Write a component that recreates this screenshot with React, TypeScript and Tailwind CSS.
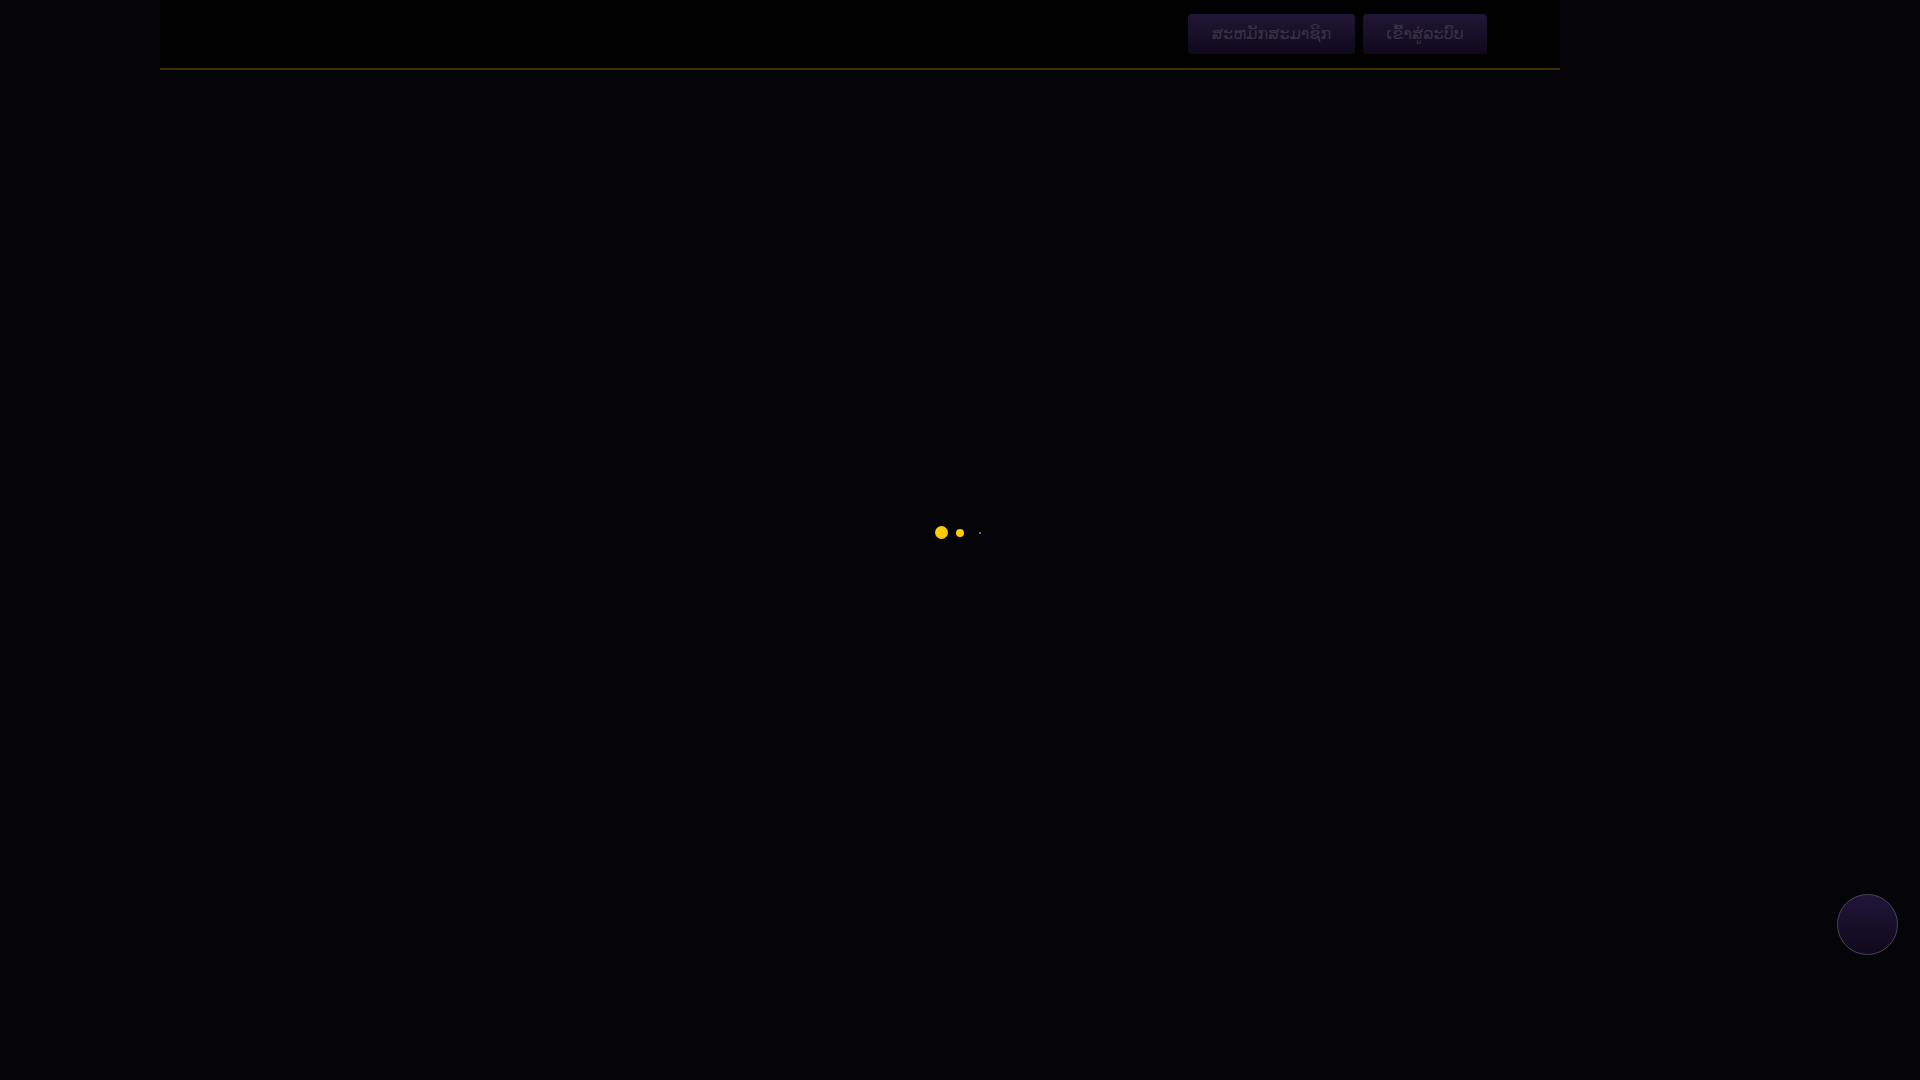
export default function App() {
  return (
    <div
      className="relative min-h-screen w-full bg-[#050409] overflow-hidden"
      style={{ fontFamily: '"DejaVu Sans", "Noto Sans", sans-serif' }}
    >
      <header className="ml-[160px] w-[1400px] h-[70px] bg-[#010102] border-b-2 border-[#3b3103] flex items-center justify-end gap-2 pr-[73px]">
        <button className="h-10 w-[167px] rounded-[4px] bg-gradient-to-b from-[#211636] to-[#10091c] text-[#383344] text-[16px]">
          ສະຫມັກສະມາຊິກ
        </button>
        <button className="h-10 w-[124px] rounded-[4px] bg-gradient-to-b from-[#211636] to-[#10091c] text-[#383344] text-[16px]">
          ເຂົ້າສູ່ລະບົບ
        </button>
      </header>

      {/* loading dots */}
      <main className="h-[924px] flex items-center justify-center">
        <div className="mr-[4px] mt-[1px] flex items-center gap-[7px]">
          <span className="w-[13px] h-[13px] rounded-full bg-[#ffcc00]" />
          <span className="ml-[1px] w-[8px] h-[8px] rounded-full bg-[#ffcc00]" />
          <span className="ml-[8px] w-[2px] h-[2px] rounded-full bg-[#b39200]" />
        </div>
      </main>

      <button className="absolute left-[1837px] top-[894px] w-[61px] h-[61px] rounded-full border border-[#4a4552] bg-gradient-to-b from-[#21153a] to-[#10091c]" />
    </div>
  )
}
